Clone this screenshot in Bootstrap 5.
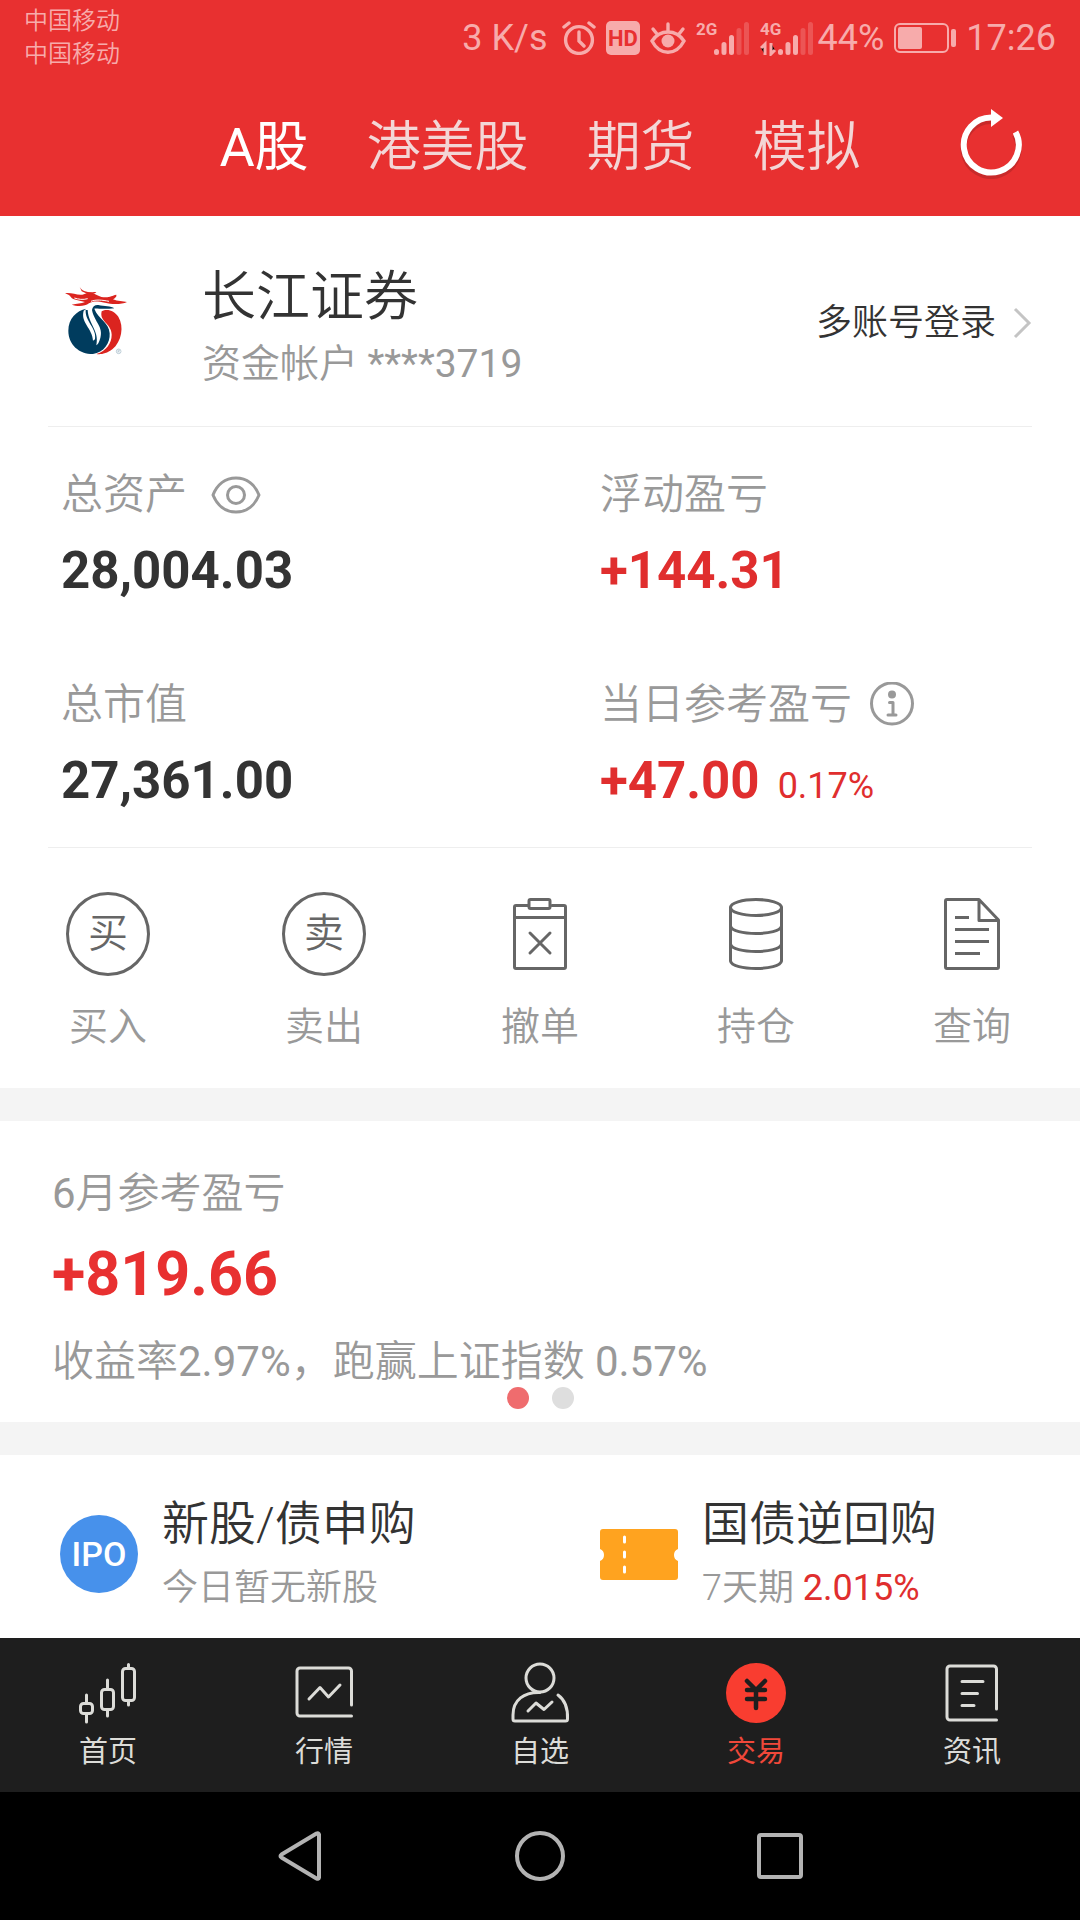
<!DOCTYPE html>
<html lang="zh-CN">
<head>
<meta charset="utf-8">
<meta name="viewport" content="width=device-width, initial-scale=1">
<title>交易</title>
<link rel="stylesheet" href="https://cdn.jsdelivr.net/npm/bootstrap@5.3.0/dist/css/bootstrap.min.css">
<style>
  :root { --brand: #e83030; --up: #e02e2e; --ink: #333; --muted: #999; --line: #eee; --band: #f4f4f4; }
  body { font-family: Roboto, "Noto Sans CJK SC", sans-serif; font-weight: 350; color: var(--ink); background: #fff; line-height: 1; }
  a { color: inherit; text-decoration: none; }
  svg { display: block; flex: none; }
  .ico { fill: none; stroke: currentColor; stroke-width: 3; stroke-linecap: round; stroke-linejoin: round; }
  .plain { background: none; border: 0; padding: 0; color: inherit; font: inherit; }
  .num { font-weight: 400; }
  .topbar { background: var(--brand); }
  .statusbar { height: 72px; padding: 4px 24px 0; color: #f7abab; }
  .carrier { font-size: 24px; line-height: 33px; padding-top: 1px; }
  .indicators { gap: 10px; font-size: 36px; font-weight: 400; line-height: 68px; }
  .markets { height: 144px; }
  .market-tabs { gap: 58px; font-size: 54px; line-height: 60px; padding-top: 8px; color: #f3d6d6; }
  .market-tabs .active { color: #fff; font-weight: 400; }
  .side { flex: 1 1 0; padding-right: 56px; }
  .inset { margin: 0 48px; border-bottom: 1px solid var(--line); }
  .broker { height: 211px; }
  .broker-text { padding-top: 18px; }
  .broker-logo { width: 154px; padding-left: 17px; }
  .broker-name { font-size: 54px; line-height: 68px; }
  .broker-acct { font-size: 39px; line-height: 64px; color: var(--muted); }
  .t-md { font-size: 36px; line-height: 48px; padding-top: 4px; }
  .figure-cell { height: 210px; padding: 40px 0 0 13px; }
  .figure-cell.right { padding-left: 60px; }
  .lbl { font-size: 42px; line-height: 56px; color: var(--muted); gap: 24px; }
  .lbl.tight { gap: 17px; }
  .amount { font-size: 51px; line-height: 64px; font-weight: 700; margin-top: 16px; gap: 18px; }
  .up { color: var(--up); }
  .pct { font-size: 36px; font-weight: 400; }
  .actions { height: 240px; padding-top: 44px; }
  .action { color: #666; }
  .action-icon { width: 84px; height: 84px; }
  .ring { border: 3px solid #666; border-radius: 50%; font-size: 40px; color: #666; }
  .action-name { font-size: 39px; line-height: 52px; margin-top: 25px; color: var(--muted); }
  .band { background: var(--band); height: 33px; }
  .monthly { padding: 48px 52px 13px; color: var(--muted); }
  .monthly .m-label { font-size: 42px; line-height: 50px; }
  .monthly .m-total { font-size: 61px; line-height: 70px; font-weight: 700; color: var(--brand); margin: 20px 0 28px; }
  .dots { gap: 23px; }
  .dot { width: 22px; height: 22px; border-radius: 50%; background: #dedede; }
  .dot.on { background: #ef6c6e; }
  .promo { height: 183px; padding: 35px 0 0 60px; gap: 24px; }
  .promo-icon { width: 78px; margin-top: 25px; }
  .ipo { height: 78px; border-radius: 50%; background: #4791eb; color: #fff; font-size: 34px; font-weight: 500; }
  .promo-title { font-size: 47px; line-height: 68px; }
  .promo-sub { font-size: 36px; line-height: 61px; color: var(--muted); }
  .tabbar { background: #1e1e1e; color: #dcdcd8; height: 154px; padding-top: 19px; }
  .tabbar a { font-size: 29px; line-height: 40px; font-weight: 400; gap: 3px; }
  .tabbar .active { color: #f0483a; }
  .sysnav { background: #000; color: #b3b3b3; height: 128px; }
  .sysnav .plain { width: 240px; }
  .sysnav .ico { stroke-width: 4; }
</style>
<script src="https://cdn.jsdelivr.net/npm/bootstrap@5.3.0/dist/js/bootstrap.bundle.min.js"></script>
</head>
<body>
<header class="topbar">
  <div class="statusbar d-flex justify-content-between">
    <div class="carrier">中国移动<br>中国移动</div>
    <div class="indicators d-flex align-items-center">
      <span class="me-1">3 K/s</span>
      <svg width="34" height="34" viewBox="0 0 34 34" fill="none" stroke="currentColor" stroke-width="3.4" stroke-linecap="round"><circle cx="17" cy="19" r="13.4"/><path d="M17 11v9l5 5M2 6l5-4M32 6l-5-4"/></svg>
      <svg width="34" height="34" viewBox="0 0 34 34"><rect width="34" height="34" rx="5" fill="currentColor"/><text x="17" y="25" text-anchor="middle" font-family="Roboto" font-weight="700" font-size="22" fill="#e83030">HD</text></svg>
      <svg width="36" height="34" viewBox="0 0 36 34" fill="none" stroke="currentColor" stroke-width="3.4" stroke-linecap="round"><path d="M2 20C10 8 26 8 34 20C26 35 10 35 2 20ZM18 3v7M3 8l4 5M33 8l-4 5"/><circle cx="18" cy="20" r="6.5" fill="currentColor" stroke="none"/></svg>
      <svg width="54" height="36" viewBox="0 0 54 36" stroke="currentColor" stroke-width="5" stroke-linecap="round"><text x="0" y="15" font-family="Roboto" font-weight="700" font-size="17" fill="currentColor" stroke="none">2G</text><path d="M20.500 32.500v-1M28 32.500v-8M35.500 32.500v-15"/><path opacity=".3" d="M43 32.500v-22M50.500 32.500v-28"/></svg>
      <span class="d-flex align-items-center gap-1">
      <svg width="54" height="36" viewBox="0 0 54 36" stroke="currentColor" stroke-width="5" stroke-linecap="round"><text x="0" y="15" font-family="Roboto" font-weight="700" font-size="17" fill="currentColor" stroke="none">4G</text><path stroke-width="3" stroke-linecap="butt" d="M5 35V24L1 28M11 23v11l4-4"/><path d="M20.500 32.500v-1M28 32.500v-8M35.500 32.500v-15"/><path opacity=".3" d="M43 32.500v-22M50.500 32.500v-28"/></svg>
      <span>44%</span></span>
      <svg width="62" height="30" viewBox="0 0 62 30"><rect x="1" y="1" width="53" height="28" rx="5" fill="none" stroke="currentColor" stroke-width="2"/><rect x="4" y="4" width="24" height="22" rx="2" fill="currentColor"/><rect x="57" y="6" width="5" height="18" rx="2" fill="currentColor"/></svg>
      <span>17:26</span>
    </div>
  </div>
  <div class="markets d-flex align-items-center">
    <div class="side"></div>
    <nav class="market-tabs d-flex">
      <a class="active" href="#" aria-current="page">A股</a><a href="#">港美股</a><a href="#">期货</a><a href="#">模拟</a>
    </nav>
    <div class="side d-flex justify-content-end">
      <button class="plain text-white" aria-label="刷新"><svg width="66" height="70" viewBox="0 0 66 70"><path d="M33 10A27.500 27.500 0 1 0 57 24" fill="none" stroke="#8d2020" stroke-opacity=".35" stroke-width="6" transform="translate(0 2)"/><path d="M34 8.500A27.500 27.500 0 1 0 57.500 23" fill="none" stroke="currentColor" stroke-width="6"/><path d="M33 0l12 9-12 9z" fill="currentColor"/></svg></button>
    </div>
  </div>
</header>

<main>
  <section class="inset broker d-flex align-items-center">
    <div class="broker-logo">
      <svg width="62" height="70" viewBox="48 50 186 210">
        <path fill="#003c5e" d="M112 118C82 124 58 148 58 184C58 226 90 254 132 254C164 250 184 222 182 192C180 158 148 150 136 118C142 116 160 121 196 117C186 110 166 111 148 107C138 106 130 112 129 122C136 158 164 172 154 206C150 220 146 226 142 228C152 184 118 164 116 122L110 122C108 158 144 176 138 210L132 214C130 176 94 160 104 124Z"/>
        <path fill="#db241f" d="M158 126C174 116 196 124 208 142C226 172 218 216 190 240C172 254 154 256 142 254C172 244 188 222 188 196C188 162 150 158 158 126Z"/>
        <path fill="#db241f" d="M48 72C64 68 82 78 100 76C112 74 114 68 128 70C140 74 152 84 170 84C184 84 190 78 202 76C204 82 198 86 192 90C206 96 222 96 234 98C218 106 188 106 168 100C146 96 134 94 120 102C108 112 84 112 68 106C84 102 96 104 108 98C92 94 72 92 66 84C62 76 56 76 48 72Z"/>
        <path fill="#db241f" d="M92 52C98 66 116 70 142 68C134 78 112 74 98 66Z"/>
        <path d="M116 88C102 92 88 90 76 86M180 96C160 92 140 90 126 96" fill="none" stroke="#fff" stroke-width="3"/>
        <circle cx="209" cy="246" r="7" fill="none" stroke="#9fb6c4" stroke-width="2"/><path d="M207 250v-8h4v4h-4l4 4" fill="none" stroke="#9fb6c4" stroke-width="1.500"/>
      </svg>
    </div>
    <div class="broker-text flex-grow-1">
      <div class="broker-name">长江证券</div>
      <div class="broker-acct">资金帐户 <span class="num">****3719</span></div>
    </div>
    <a href="#" class="t-md d-flex align-items-center gap-3">多账号登录
      <svg width="20" height="32" viewBox="0 0 20 32" fill="none" stroke="#c4c4c4" stroke-width="3"><path d="M3 2l14 14L3 30"/></svg></a>
  </section>

  <section class="inset row gx-0">
    <div class="col-6 figure-cell">
      <div class="lbl d-flex align-items-center">总资产
        <button class="plain" aria-label="显示或隐藏"><svg class="ico" width="50" height="38" viewBox="0 0 50 38"><path d="M2 19C6 9 14 2 25 2S44 9 48 19C44 29 36 36 25 36S6 29 2 19Z"/><circle cx="25" cy="19" r="8.500"/></svg></button></div>
      <div class="amount">28,004.03</div>
    </div>
    <div class="col-6 figure-cell right">
      <div class="lbl">浮动盈亏</div>
      <div class="amount up">+144.31</div>
    </div>
    <div class="col-6 figure-cell">
      <div class="lbl">总市值</div>
      <div class="amount">27,361.00</div>
    </div>
    <div class="col-6 figure-cell right">
      <div class="lbl tight d-flex align-items-center">当日参考盈亏
        <button class="plain" aria-label="说明"><svg class="ico" width="46" height="46" viewBox="0 0 46 46"><circle cx="23" cy="21.500" r="20.500"/><path d="M20.500 20.500H24V32.500M19 33h8"/><circle cx="23" cy="12.500" r="2.500" fill="currentColor"/></svg></button></div>
      <div class="amount up d-flex align-items-baseline"><span>+47.00</span><span class="pct">0.17%</span></div>
    </div>
  </section>

  <nav class="actions row row-cols-5 gx-0 text-center">
    <a href="#" class="action col d-flex flex-column align-items-center"><span class="action-icon ring d-flex align-items-center justify-content-center">买</span><span class="action-name">买入</span></a>
    <a href="#" class="action col d-flex flex-column align-items-center"><span class="action-icon ring d-flex align-items-center justify-content-center">卖</span><span class="action-name">卖出</span></a>
    <a href="#" class="action col d-flex flex-column align-items-center"><svg class="ico action-icon" viewBox="0 0 84 84"><path d="M30 13.500H18a1.500 1.500 0 0 0-1.500 1.500V75a1.500 1.500 0 0 0 1.500 1.500H66a1.500 1.500 0 0 0 1.500-1.500V15a1.500 1.500 0 0 0-1.500-1.500H54M17 25.500H67M32 41L52 61M52 41L32 61"/><rect x="31" y="7.500" width="21" height="9" rx="1.500"/></svg><span class="action-name">撤单</span></a>
    <a href="#" class="action col d-flex flex-column align-items-center"><svg class="ico action-icon" viewBox="0 0 84 84"><ellipse cx="42" cy="15.500" rx="25.500" ry="8"/><path d="M16.500 15.500V69C18 79 66 79 67.500 69V15.500M16.500 34C18 44 66 44 67.500 34M16.500 52C18 62 66 62 67.500 52"/></svg><span class="action-name">持仓</span></a>
    <a href="#" class="action col d-flex flex-column align-items-center"><svg class="ico action-icon" viewBox="0 0 84 84"><path d="M49 7.500H17a1.500 1.500 0 0 0-1.500 1.500V75a1.500 1.500 0 0 0 1.500 1.500H67a1.500 1.500 0 0 0 1.500-1.500V28ZM49 7.500V28.500H68"/><path stroke-linecap="butt" d="M25 25.500H39M25 37.500H59M25 49.500H59M25 61.500H50"/></svg><span class="action-name">查询</span></a>
  </nav>

  <div class="band"></div>

  <section class="monthly">
    <div class="m-label"><span class="num">6</span>月参考盈亏</div>
    <div class="m-total">+819.66</div>
    <div class="m-label">收益率<span class="num">2.97%</span>，跑赢上证指数 <span class="num">0.57%</span></div>
    <div class="dots d-flex justify-content-center"><span class="dot on"></span><span class="dot"></span></div>
  </section>

  <div class="band"></div>

  <section class="row gx-0">
    <div class="col-6"><a href="#" class="promo d-flex">
      <span class="promo-icon ipo d-flex align-items-center justify-content-center">IPO</span>
      <span><span class="promo-title d-block">新股/债申购</span><span class="promo-sub d-block">今日暂无新股</span></span></a></div>
    <div class="col-6"><a href="#" class="promo d-flex">
      <svg class="promo-icon" height="78" viewBox="0 0 78 78"><path fill="#ffa31f" d="M3 14H75a3 3 0 0 1 3 3V34a6.500 6.500 0 0 0 0 12V62a3 3 0 0 1-3 3H3a3 3 0 0 1-3-3V46a6.500 6.500 0 0 0 0-12V17a3 3 0 0 1 3-3Z"/><path d="M24.500 22v5M24.500 37v5M24.500 52v5" stroke="#fff" stroke-width="3" stroke-linecap="round"/></svg>
      <span><span class="promo-title d-block">国债逆回购</span><span class="promo-sub d-block">7天期 <span class="up num">2.015%</span></span></span></a></div>
  </section>
</main>

<footer>
  <nav class="tabbar row row-cols-5 gx-0">
    <a href="#" class="col d-flex flex-column align-items-center"><svg class="ico" width="72" height="72" viewBox="0 0 72 72"><rect x="8.500" y="46.500" width="12" height="10" rx="3"/><path d="M14.500 38v8M14.500 57v8M35.500 23v8M35.500 53v6M56.500 7.500v4M56.500 44v4"/><rect x="29.500" y="32.500" width="12" height="20" rx="3"/><rect x="50.500" y="11.500" width="12" height="32" rx="3"/></svg>首页</a>
    <a href="#" class="col d-flex flex-column align-items-center"><svg class="ico" width="72" height="72" viewBox="0 0 72 72"><path d="M63.500 48V14a3 3 0 0 0-3-3H12a3 3 0 0 0-3 3V56a3 3 0 0 0 3 3H63.500M21 42L32 30.500L40.500 40L52 28"/></svg>行情</a>
    <a href="#" class="col d-flex flex-column align-items-center"><svg class="ico" width="72" height="72" viewBox="0 0 72 72"><circle cx="36" cy="21" r="14"/><path d="M36 35.500C20 35 9 43 9 58V62a2 2 0 0 0 2 2H61.500a2 2 0 0 0 2-2C64 50 61 43 54 38M24 54L32 46L40 52.500L48 45"/></svg>自选</a>
    <a href="#" class="active col d-flex flex-column align-items-center" aria-current="page"><svg width="72" height="72" viewBox="0 0 72 72"><circle cx="36" cy="36" r="30" fill="#f93d30"/><path d="M27 24l9 9l9-9M27 33H45M27 42H45M36 33V51" fill="none" stroke="#1e1e1e" stroke-width="4.500" stroke-linecap="round" stroke-linejoin="round"/></svg>交易</a>
    <a href="#" class="col d-flex flex-column align-items-center"><svg class="ico" width="72" height="72" viewBox="0 0 72 72"><path d="M60.500 52V12a3 3 0 0 0-3-3H14a3 3 0 0 0-3 3V60a3 3 0 0 0 3 3H60.500M26 24.500H47M26 36.500H41.500M26 48.500H38"/></svg>资讯</a>
  </nav>
  <div class="sysnav d-flex justify-content-center">
    <button class="plain d-flex align-items-center justify-content-center" aria-label="返回"><svg class="ico" width="56" height="56" viewBox="0 0 56 56"><path d="M47 6.500V49.500Q46.500 51.500 44.500 50.500L9.500 29.500Q7.500 28 9.500 26.500L44.500 5.500Q46.500 4.500 47 6.500Z"/></svg></button>
    <button class="plain d-flex align-items-center justify-content-center" aria-label="主屏幕"><svg class="ico" width="56" height="56" viewBox="0 0 56 56"><circle cx="28" cy="28" r="23"/></svg></button>
    <button class="plain d-flex align-items-center justify-content-center" aria-label="最近任务"><svg class="ico" width="56" height="56" viewBox="0 0 56 56"><rect x="7" y="7" width="42" height="42" rx="2"/></svg></button>
  </div>
</footer>
</body>
</html>
